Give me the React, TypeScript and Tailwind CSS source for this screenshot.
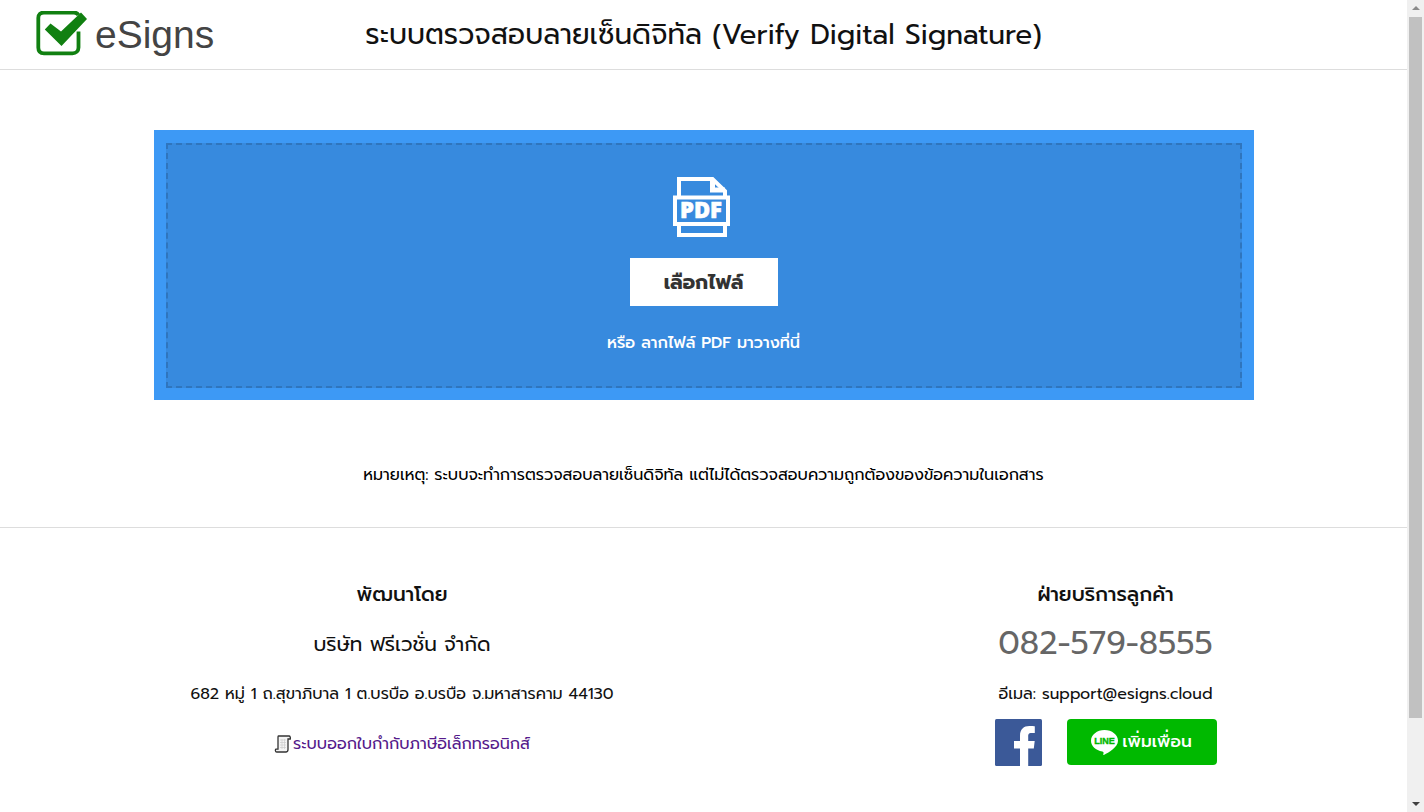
import React from 'react';

const LogoMark = () => (
  <svg viewBox="0 0 52 48" className="h-12 w-[52px]" aria-hidden="true">
    <path
      d="M42.500 4C41.500 2.500 40 1.500 38 1.500H8C4.500 1.500 2.300 3.500 2.300 7v29.500C2.300 40.500 4.500 42.300 8 42.300h28.500c3.500 0 6-2.300 6-5.800V20.500"
      fill="none"
      stroke="#118011"
      strokeWidth="3.800"
    />
    <path d="M8.800 18.500L14.500 12.500 25 20.500 45 1.500 51 8 25.500 35z" fill="#118011" />
  </svg>
);

const PdfIcon = () => (
  <svg viewBox="0 0 62 60" className="h-[60px] w-[62px]" aria-hidden="true">
    <g fill="none" stroke="#fff" strokeWidth="4">
      <path d="M6 20V2H39.500L52 14V20" />
      <path d="M39.500 2V13H52" strokeWidth="5" />
      <path d="M2 20.500H55V47H2z" />
      <path d="M6 47V58H52V47" />
    </g>
    <text
      x="28"
      y="41"
      textAnchor="middle"
      fill="#fff"
      stroke="#fff"
      strokeWidth=".6"
      className="font-['Open_Sans',sans-serif] text-[22px] font-extrabold"
    >
      PDF
    </text>
  </svg>
);

const ScrollIcon = () => (
  <svg viewBox="0 0 17 18" className="h-[18px] w-[17px]" aria-hidden="true">
    <path
      d="M4.500 1h10.500c1.200 0 1.500 1.500 1.300 3h-2.300v10.500c0 1.500-.8 2.500-2.200 2.500H2.700C1.100 17 1.100 14.500 2 14.200H4V3.500C4 2 4 1 4.500 1z"
      fill="#f4f4f4"
      stroke="#333"
      strokeWidth="1.300"
    />
    <path d="M6 5h6M6 7.500h6M6 10h6M6 12.500h6M8 4v10M10.500 4v10" stroke="#ccc" strokeWidth=".7" />
  </svg>
);

const FacebookIcon = () => (
  <svg viewBox="0 0 47 47" className="size-[47px]" aria-hidden="true">
    <rect width="47" height="47" rx="1.500" fill="#3b5998" />
    <path
      d="M25 47V29.500h-6v-7.500h6v-5.500c0-6.200 3.800-9.500 9.300-9.500 2.600 0 4.900.2 5.500.3v6.800h-3.300c-3 0-3.300 1.500-3.300 3.600V22h6.500l-.9 7.500h-5.600v17.500z"
      fill="#fff"
    />
  </svg>
);

const LineIcon = () => (
  <svg viewBox="0 0 27 25" className="h-[25px] w-[27px]" aria-hidden="true">
    <path
      d="M13.500 0C6 0 0 4.800 0 10.800c0 5.300 4.800 9.800 11.300 10.600 1.600.4 1.300 1.200 1 3.200-.1.600.4.500 1 .2C17 22.800 27 17.500 27 10.800 27 4.800 21 0 13.500 0z"
      fill="#fff"
    />
    <text
      x="13.500"
      y="14"
      textAnchor="middle"
      fill="#00b900"
      stroke="#00b900"
      strokeWidth=".4"
      className="font-['Liberation_Sans',sans-serif] text-[9px] font-bold"
    >
      LINE
    </text>
  </svg>
);

const Scrollbar = () => (
  <div className="sticky top-0 flex h-screen w-[17px] shrink-0 flex-col items-center justify-between bg-[#f0f0f0] py-1" aria-hidden="true">
    <svg viewBox="0 0 8 8" className="size-2">
      <path d="M0 6h8L4 2z" fill="#8a8a8a" />
    </svg>
    <div className="mt-[5px] mb-[82px] w-[13px] grow bg-[#c1c1c1]"></div>
    <svg viewBox="0 0 8 8" className="size-2">
      <path d="M0 2h8L4 6z" fill="#404040" />
    </svg>
  </div>
);

const App: React.FC = () => {
  return (
    <div className="flex min-h-screen bg-white font-['Prompt','Noto_Sans_Thai','Noto_Sans',sans-serif] text-base text-[#111]">
      <div className="min-w-0 grow">
        <header className="grid h-[70px] grid-cols-[1fr_auto_1fr] items-center border-b border-[#ddd] px-9">
          <a href="#" className="flex items-center gap-[7px]">
            <LogoMark />
            <span className="font-['Liberation_Sans',sans-serif] text-[39px] leading-[46px] text-[#444]">eSigns</span>
          </a>
          <h1 className="text-[28px] leading-10">ระบบตรวจสอบลายเซ็นดิจิทัล (Verify Digital Signature)</h1>
        </header>

        <main>
          <section className="mx-auto mt-[60px] max-w-[1100px] bg-[#3d99f5] px-3 pt-[13px] pb-3">
            <div className="flex h-[245px] flex-col items-center border-2 border-dashed border-[#2f75bd] bg-[#378ade] pt-8">
              <PdfIcon />
              <button type="button" className="mt-[21px] h-12 w-[148px] bg-white text-xl font-bold text-[#333]">
                เลือกไฟล์
              </button>
              <p className="mt-[25px] leading-6 font-medium text-white">หรือ ลากไฟล์ PDF มาวางที่นี่</p>
            </div>
          </section>
          <p className="mt-[63px] mb-10 text-center leading-6 text-black">
            หมายเหตุ: ระบบจะทำการตรวจสอบลายเซ็นดิจิทัล แต่ไม่ได้ตรวจสอบความถูกต้องของข้อความในเอกสาร
          </p>
        </main>

        <footer className="grid grid-cols-[4fr_3fr] border-t border-[#ddd] pt-[50px] text-center">
          <div className="flex flex-col items-center">
            <h2 className="text-xl leading-8 font-medium">พัฒนาโดย</h2>
            <p className="mt-[18px] text-xl leading-8">บริษัท ฟรีเวชั่น จำกัด</p>
            <p className="mt-[22px] leading-6">682 หมู่ 1 ถ.สุขาภิบาล 1 ต.บรบือ อ.บรบือ จ.มหาสารคาม 44130</p>
            <a href="#" className="mt-[26px] flex items-center gap-0.5 leading-6 text-[#551a8b]">
              <ScrollIcon />
              ระบบออกใบกำกับภาษีอิเล็กทรอนิกส์
            </a>
          </div>
          <div className="flex flex-col items-center">
            <h2 className="text-xl leading-8 font-medium">ฝ่ายบริการลูกค้า</h2>
            <p className="mt-[12px] text-[32px] leading-[44px] text-[#666]">082-579-8555</p>
            <p className="mt-[16px] leading-6">อีเมล: support@esigns.cloud</p>
            <div className="mt-[13px] flex gap-[25px]">
              <a href="#" aria-label="Facebook">
                <FacebookIcon />
              </a>
              <a href="#" className="flex h-[46px] w-[150px] items-center justify-center gap-1 rounded-sm bg-[#00b900] text-[17px] font-medium text-white">
                <LineIcon />
                เพิ่มเพื่อน
              </a>
            </div>
          </div>
        </footer>
      </div>
      <Scrollbar />
    </div>
  );
};

export default App;
